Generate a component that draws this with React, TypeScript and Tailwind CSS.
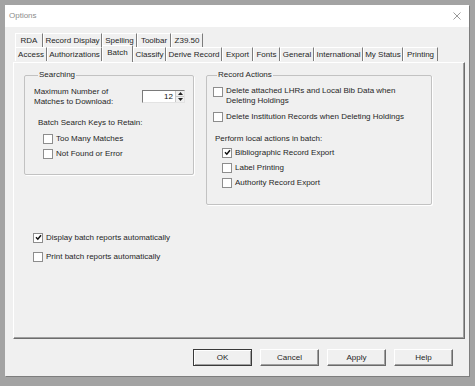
import React from 'react';

type TabDef = { label: string; w: string; active?: boolean };

const row1: TabDef[] = [
  { label: 'RDA', w: 'w-[28px]' },
  { label: 'Record Display', w: 'w-[59px]' },
  { label: 'Spelling', w: 'w-[35px]' },
  { label: 'Toolbar', w: 'w-[34px]' },
  { label: 'Z39.50', w: 'w-[32px]' },
];

const row2: TabDef[] = [
  { label: 'Access', w: 'w-[32px]' },
  { label: 'Authorizations', w: 'w-[55px]' },
  { label: 'Batch', w: 'w-[31px]', active: true },
  { label: 'Classify', w: 'w-[33px]' },
  { label: 'Derive Record', w: 'w-[56px]' },
  { label: 'Export', w: 'w-[31px]' },
  { label: 'Fonts', w: 'w-[27px]' },
  { label: 'General', w: 'w-[34px]' },
  { label: 'International', w: 'w-[49px]' },
  { label: 'My Status', w: 'w-[40px]' },
  { label: 'Printing', w: 'w-[35px]' },
];

const Box = ({ checked }: { checked?: boolean }) => (
  <span className="w-[10px] h-[10px] shrink-0 bg-white border border-[#8d8d8d] flex items-center justify-center">
    {checked && (
      <svg width="7" height="7" viewBox="0 0 7 7">
        <path d="M1 3.3 L2.8 5.2 L6 1.2" fill="none" stroke="#111" strokeWidth="1.5" />
      </svg>
    )}
  </span>
);

const CheckRow = ({ label, checked }: { label: string; checked?: boolean }) => (
  <div className="h-[15px] flex items-center gap-[3px]">
    <Box checked={checked} />
    <span>{label}</span>
  </div>
);

const Tab = ({ t }: { t: TabDef }) =>
  t.active ? (
    <div
      className={`${t.w} h-[17px] -mt-[2px] relative z-10 bg-[#f0f0f0] border-l border-t border-white border-r border-r-[#7c7c7c] flex items-center justify-center pb-[3px]`}
    >
      {t.label}
    </div>
  ) : (
    <div
      className={`${t.w} h-[14px] border-l border-t border-white border-r border-r-[#7c7c7c] flex items-center justify-center`}
    >
      {t.label}
    </div>
  );

const Btn = ({ label, def }: { label: string; def?: boolean }) => (
  <div
    className={
      def
        ? 'w-[59px] h-[17px] flex items-center justify-center bg-[#f0f0f0] border border-[#3a3a3a] shadow-[inset_1px_1px_0_#fff,inset_-1px_-1px_0_#a0a0a0]'
        : 'w-[59px] h-[17px] flex items-center justify-center bg-[#f0f0f0] border border-t-white border-l-white border-r-[#6a6a6a] border-b-[#6a6a6a] shadow-[inset_-1px_-1px_0_#a0a0a0]'
    }
  >
    {label}
  </div>
);

export default function App() {
  return (
    <div className="w-[475px] h-[386px] bg-[#a3a3a3] pl-[5px] pt-[5px] font-['Liberation_Sans',Arial,sans-serif] text-[8px] leading-[10px] text-[#262626]">
      <div className="w-[464px] h-[371px] bg-[#f0f0f0] flex flex-col shadow-[1px_1px_0_#7d7d7d]">
        {/* Title bar */}
        <div className="h-[22px] bg-white flex items-center justify-between pl-[4px] pr-[8px] shrink-0">
          <span className="text-[#8c8c8c]">Options</span>
          <svg width="8" height="8" viewBox="0 0 8 8">
            <path d="M0.5 0.5 L7.5 7.5 M7.5 0.5 L0.5 7.5" stroke="#9a9a9a" strokeWidth="1" />
          </svg>
        </div>

        <div className="pl-[8px] pr-[4px] pt-[6px] flex flex-col">
          {/* Tabs */}
          <div className="pl-[2px] flex flex-col">
            <div className="flex">
              {row1.map((t) => (
                <Tab key={t.label} t={t} />
              ))}
            </div>
            <div className="flex">
              {row2.map((t) => (
                <Tab key={t.label} t={t} />
              ))}
            </div>
          </div>

          {/* Panel */}
          <div className="h-[277px] border border-t-white border-l-white border-r-[#6d6d6d] border-b-[#6d6d6d] shadow-[inset_-1px_-1px_0_#a0a0a0] pl-[10px] pt-[7px] flex flex-col">
            <div className="flex gap-[12px] items-start">
              {/* Searching */}
              <fieldset className="w-[170px] h-[105px] border border-[#c2c2c2] rounded-[2px] shadow-[1px_1px_0_#fff] pl-[9px] pr-[8px]">
                <legend className="ml-[4px] px-[1px]">Searching</legend>
                <div className="mt-[7px] flex justify-between items-start">
                  <div>
                    <div>Maximum Number of</div>
                    <div>Matches to Download:</div>
                  </div>
                  <div className="mt-[3px] w-[43px] h-[13px] bg-white border border-t-[#7a7a7a] border-l-[#7a7a7a] border-r-[#e3e3e3] border-b-[#e3e3e3] flex items-stretch">
                    <div className="flex-1 flex items-center justify-end pr-[2px] text-[#111]">12</div>
                    <div className="w-[9px] flex flex-col border-l border-[#c8c8c8] bg-[#f0f0f0]">
                      <div className="flex-1 flex items-center justify-center border-b border-[#c8c8c8]">
                        <svg width="5" height="3" viewBox="0 0 5 3">
                          <path d="M0 3 L2.5 0 L5 3 Z" fill="#222" />
                        </svg>
                      </div>
                      <div className="flex-1 flex items-center justify-center">
                        <svg width="5" height="3" viewBox="0 0 5 3">
                          <path d="M0 0 L2.5 3 L5 0 Z" fill="#222" />
                        </svg>
                      </div>
                    </div>
                  </div>
                </div>
                <div className="mt-[11px] pl-[4px]">Batch Search Keys to Retain:</div>
                <div className="mt-[3px] pl-[9px] flex flex-col">
                  <CheckRow label="Too Many Matches" />
                  <CheckRow label="Not Found or Error" />
                </div>
              </fieldset>

              {/* Record Actions */}
              <fieldset className="w-[226px] h-[135px] border border-[#c2c2c2] rounded-[2px] shadow-[1px_1px_0_#fff] pl-[6px] pr-[6px]">
                <legend className="ml-[4px] px-[1px]">Record Actions</legend>
                <div className="mt-[6px] flex items-start gap-[3px]">
                  <span className="mt-[1px]">
                    <Box />
                  </span>
                  <span>
                    Delete attached LHRs and Local Bib Data when
                    <br />
                    Deleting Holdings
                  </span>
                </div>
                <div className="mt-[3px]">
                  <CheckRow label="Delete Institution Records when Deleting Holdings" />
                </div>
                <div className="mt-[10px] pl-[2px]">Perform local actions in batch:</div>
                <div className="mt-[1px] pl-[9px] flex flex-col">
                  <CheckRow label="Bibliographic Record Export" checked />
                  <CheckRow label="Label Printing" />
                  <CheckRow label="Authority Record Export" />
                </div>
              </fieldset>
            </div>

            <div className="mt-[25px] pl-[9px] flex flex-col gap-[4px]">
              <CheckRow label="Display batch reports automatically" checked />
              <CheckRow label="Print batch reports automatically" />
            </div>
          </div>

          {/* Buttons */}
          <div className="mt-[10px] pr-[12px] flex justify-end gap-[8px]">
            <Btn label="OK" def />
            <Btn label="Cancel" />
            <Btn label="Apply" />
            <Btn label="Help" />
          </div>
        </div>
      </div>
    </div>
  );
}
